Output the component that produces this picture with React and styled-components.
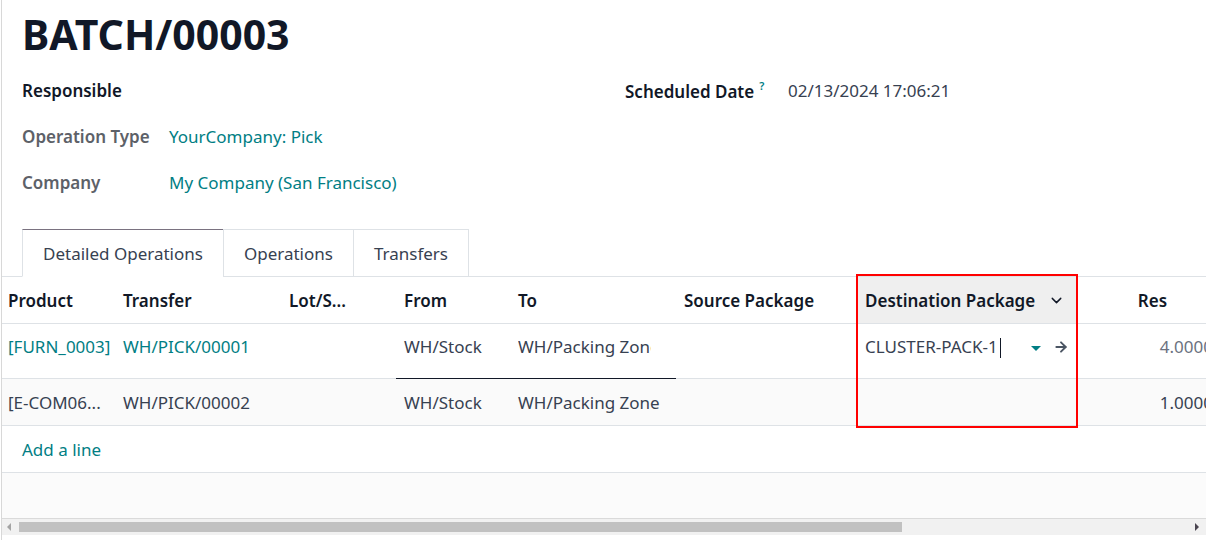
import React from 'react';
import styled, { createGlobalStyle } from 'styled-components';
import { ChevronDown, ArrowRight } from 'lucide-react';

const GlobalStyle = createGlobalStyle`
  html, body {
    margin: 0;
    padding: 0;
    background: #fff;
    overflow: hidden;
  }
  body {
    font-family: "Noto Sans", "Open Sans", sans-serif;
    font-size: 17px;
    color: #374151;
  }
`;

const TEAL = '#017e84';
const LINE = '#dee2e6';

const Sheet = styled.div`
  position: relative;
  margin-left: 1px;
  border-left: 1px solid #d8d8d8;
  height: 540px;
  overflow: hidden;
  display: flex;
  flex-direction: column;
`;

const Head = styled.div`
  padding: 9px 0 0 20px;
`;

const Title = styled.h1`
  margin: 0;
  font-size: 41px;
  line-height: 50px;
  font-weight: 700;
  color: #111827;
`;

const Groups = styled.div`
  display: grid;
  grid-template-columns: 603px 1fr;
  margin-top: 8px;
`;

const Field = styled.div`
  display: grid;
  grid-template-columns: ${p => p.labelWidth}px 1fr;
  align-items: center;
  height: 46px;
`;

const Label = styled.span`
  font-weight: 600;
  color: ${p => (p.strong ? '#111827' : '#5d6168')};
  white-space: nowrap;
`;

const Help = styled.sup`
  color: ${TEAL};
  font-size: 11px;
  margin-left: 5px;
  vertical-align: 8px;
`;

const Value = styled.span`
  color: ${p => (p.link ? TEAL : '#374151')};
  white-space: nowrap;
`;

const TabBar = styled.div`
  display: flex;
  margin-top: 24px;
  padding-left: 20px;
  border-bottom: 1px solid ${LINE};
`;

const Tab = styled.div`
  height: 46px;
  display: flex;
  align-items: center;
  padding: 0 20px;
  margin-bottom: -1px;
  margin-left: ${p => (p.first ? 0 : -1)}px;
  background: #fff;
  border: 1px solid ${LINE};
  border-top-color: ${p => (p.active ? '#7a7280' : LINE)};
  border-bottom-color: ${p => (p.active ? '#fff' : LINE)};
  color: #374151;
  white-space: nowrap;
`;

const Grid = styled.div`
  display: grid;
  grid-template-columns: 113px 166px 115px 114px 166px 181px 220px 151px;
  width: max-content;
  flex-shrink: 0;
  background: ${p => p.bg || '#fff'};
`;

const Cell = styled.div`
  box-sizing: border-box;
  height: ${p => (p.edit ? 55 : 47)}px;
  display: flex;
  align-items: center;
  justify-content: ${p => p.align || 'flex-start'};
  padding: 0 ${p => (p.num ? 15 : 8)}px ${p => (p.edit ? 9 : 0)}px ${p => (p.first ? 6 : 8)}px;
  border-bottom: 1px solid ${p => (p.focused ? '#111827' : LINE)};
  background: ${p => (p.shade ? '#efefef' : 'transparent')};
  color: ${p => p.color || '#374151'};
  font-weight: ${p => (p.head ? 600 : 400)};
  white-space: nowrap;
  overflow: hidden;
`;

const HeadText = styled.span`
  color: #111827;
`;

const Clip = styled.span`
  display: block;
  width: ${p => p.w}px;
  overflow: hidden;
`;

const Editor = styled.div`
  display: flex;
  align-items: center;
  width: 100%;
  margin-right: -5px;
`;

const EditText = styled.span`
  flex: 1;
  color: #374151;
`;

const Caret = styled.span`
  display: inline-block;
  width: 1px;
  height: 20px;
  background: #111827;
  margin-left: 2px;
  vertical-align: middle;
`;

const Triangle = styled.span`
  width: 0;
  height: 0;
  border-left: 5px solid transparent;
  border-right: 5px solid transparent;
  border-top: 5px solid ${TEAL};
  margin: 3px 12px 0 0;
`;

const AddRow = styled.div`
  box-sizing: border-box;
  height: 47px;
  display: flex;
  align-items: center;
  padding-left: 20px;
  border-bottom: 1px solid ${LINE};
  color: ${TEAL};
  width: 1226px;
`;

const Filler = styled.div`
  flex: 1;
  background: #fbfbfb;
`;

const Scrollbar = styled.div`
  height: 16px;
  border-top: 1px solid #dadada;
  background: #f1f1f1;
  display: flex;
  align-items: center;
  margin-bottom: 5px;
  padding: 0 7px 0 5px;
`;

const Arrow = styled.span`
  width: 0;
  height: 0;
  border-top: 4px solid transparent;
  border-bottom: 4px solid transparent;
  ${p => (p.dir === 'left'
    ? 'border-right: 4px solid #a3a3a3;'
    : 'border-left: 4px solid #4a4550;')}
`;

const Thumb = styled.div`
  width: 883px;
  height: 10px;
  background: #c1c1c1;
  margin-left: 8px;
`;

const Track = styled.div`
  flex: 1;
`;

const Highlight = styled.div`
  position: absolute;
  left: 854px;
  top: 274px;
  width: 222px;
  height: 154px;
  box-sizing: border-box;
  border: 2px solid #f00;
  pointer-events: none;
`;

const columns = ['Product', 'Transfer', 'Lot/S...', 'From', 'To', 'Source Package'];

export default function App() {
  return (
    <>
      <GlobalStyle />
      <Sheet>
        <Head>
          <Title>BATCH/00003</Title>
          <Groups>
            <div>
              <Field labelWidth={147}>
                <Label strong>Responsible</Label>
                <Value />
              </Field>
              <Field labelWidth={147}>
                <Label>Operation Type</Label>
                <Value link>YourCompany: Pick</Value>
              </Field>
              <Field labelWidth={147}>
                <Label>Company</Label>
                <Value link>My Company (San Francisco)</Value>
              </Field>
            </div>
            <div>
              <Field labelWidth={163}>
                <Label strong>Scheduled Date<Help>?</Help></Label>
                <Value>02/13/2024 17:06:21</Value>
              </Field>
            </div>
          </Groups>
        </Head>

        <TabBar>
          <Tab first active>Detailed Operations</Tab>
          <Tab>Operations</Tab>
          <Tab>Transfers</Tab>
        </TabBar>

        <Grid>
          {columns.map((c, i) => (
            <Cell key={c} head first={i === 0}><HeadText>{c}</HeadText></Cell>
          ))}
          <Cell head shade align="space-between">
            <HeadText>Destination Package</HeadText>
            <ChevronDown size={17} strokeWidth={2} color="#111827" style={{ marginRight: 4 }} />
          </Cell>
          <Cell head align="center"><HeadText>Res</HeadText></Cell>
        </Grid>

        <Grid>
          <Cell edit first color={TEAL}>[FURN_0003]</Cell>
          <Cell edit color={TEAL}>WH/PICK/00001</Cell>
          <Cell edit />
          <Cell edit focused>WH/Stock</Cell>
          <Cell edit focused><Clip w={133}>WH/Packing Zone</Clip></Cell>
          <Cell edit />
          <Cell edit>
            <Editor>
              <EditText>CLUSTER-PACK-1<Caret /></EditText>
              <Triangle />
              <ArrowRight size={16} strokeWidth={2.8} color="#4b5563" />
            </Editor>
          </Cell>
          <Cell edit num align="flex-end" color="#6b7280">4.0000</Cell>
        </Grid>

        <Grid bg="#fafafa">
          <Cell first>[E-COM06...</Cell>
          <Cell>WH/PICK/00002</Cell>
          <Cell />
          <Cell>WH/Stock</Cell>
          <Cell>WH/Packing Zone</Cell>
          <Cell />
          <Cell />
          <Cell num align="flex-end">1.0000</Cell>
        </Grid>

        <AddRow>Add a line</AddRow>
        <Filler />

        <Scrollbar>
          <Arrow dir="left" />
          <Thumb />
          <Track />
          <Arrow dir="right" />
        </Scrollbar>

        <Highlight />
      </Sheet>
    </>
  );
}
